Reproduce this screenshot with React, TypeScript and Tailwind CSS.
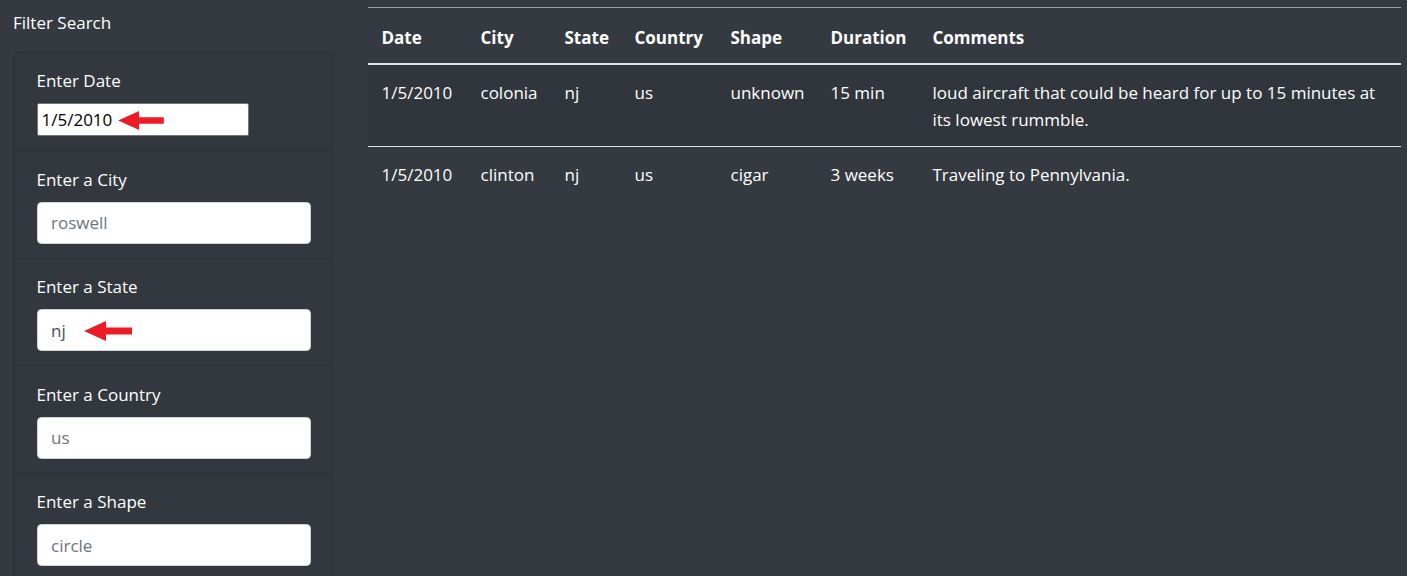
import React from 'react';

type Sighting = {
  datetime: string;
  city: string;
  state: string;
  country: string;
  shape: string;
  duration: string;
  comments: string;
};

const rows: Sighting[] = [
  {
    datetime: '1/5/2010',
    city: 'colonia',
    state: 'nj',
    country: 'us',
    shape: 'unknown',
    duration: '15 min',
    comments: 'loud aircraft that could be heard for up to 15 minutes at its lowest rummble.',
  },
  {
    datetime: '1/5/2010',
    city: 'clinton',
    state: 'nj',
    country: 'us',
    shape: 'cigar',
    duration: '3 weeks',
    comments: 'Traveling to Pennylvania.',
  },
];

// red annotation arrow pointing left
function Arrow({ className }: { className?: string }) {
  return (
    <svg viewBox="0 0 48 20" className={className} aria-hidden="true">
      <polygon points="0,10 22,0 22,6.5 48,6.5 48,13.5 22,13.5 22,20" fill="#ed1c24" />
    </svg>
  );
}

const cols = [
  { label: 'Date', w: 'w-[99px]' },
  { label: 'City', w: 'w-[84px]' },
  { label: 'State', w: 'w-[70px]' },
  { label: 'Country', w: 'w-[96px]' },
  { label: 'Shape', w: 'w-[100px]' },
  { label: 'Duration', w: 'w-[102px]' },
  { label: 'Comments', w: '' },
];

function FilterItem({ label, placeholder, value, arrow }: { label: string; placeholder: string; value?: string; arrow?: boolean }) {
  return (
    <li className="border-b border-[#2b3035] px-[22.5px] pt-[14.5px] pb-[14px]">
      <label className="block mb-[9px] text-white">{label}</label>
      <div className="relative">
        <input
          className="w-[274px] h-[42px] rounded-[4.5px] border border-[#ced4da] bg-white px-[13.5px] text-[#495057] placeholder:text-[#6c757d] outline-none"
          placeholder={placeholder}
          defaultValue={value}
        />
        {arrow && <Arrow className="absolute left-[44px] top-[12px] w-[54px] h-[20px]" />}
      </div>
    </li>
  );
}

export default function App() {
  return (
    <div
      className="min-h-screen bg-[#343a40] text-white flex text-[17px] leading-[27px]"
      style={{ fontFamily: '"Open Sans", "Noto Sans", sans-serif' }}
    >
      <aside className="w-[346px] shrink-0 pl-[13px] pr-[13px]">
        <h5 className="pt-[8.5px] mb-[16.5px] text-[17px]">Filter Search</h5>
        <ul className="w-[320px] rounded-t-[4.5px] border border-[#2b3035] bg-[#32383e]">
          <li className="border-b border-[#2b3035] px-[22.5px] pt-[14px] pb-[14px]">
            <label className="block mb-[9px] text-white">Enter Date</label>
            <div className="relative">
              <input
                className="w-[212px] h-[33px] rounded-[2px] border border-[#767676] bg-white px-[4px] text-black outline-none"
                defaultValue="1/5/2010"
              />
              <Arrow className="absolute left-[80px] top-[8px] w-[48px] h-[19px]" />
            </div>
          </li>
          <FilterItem label="Enter a City" placeholder="roswell" />
          <FilterItem label="Enter a State" placeholder="CA" value="nj" arrow />
          <FilterItem label="Enter a Country" placeholder="us" />
          <FilterItem label="Enter a Shape" placeholder="circle" />
        </ul>
      </aside>
      <main className="flex-1 pl-[22px] pr-[6px] pt-[7px]">
        <table className="w-full border-collapse table-fixed">
          <thead>
            <tr className="border-t border-[#9a9ea3] border-b-2 border-b-[#dee2e6]">
              {cols.map((c) => (
                <th key={c.label} className={`${c.w} text-left font-bold px-[13.5px] pt-[16px] pb-[12px] align-bottom`}>
                  {c.label}
                </th>
              ))}
            </tr>
          </thead>
          <tbody>
            {rows.map((r, i) => (
              <tr key={i} className={i % 2 === 0 ? 'bg-[#30363c] border-b border-[#dee2e6]' : ''}>
                <td className="px-[13.5px] py-[13.5px] align-top">{r.datetime}</td>
                <td className="px-[13.5px] py-[13.5px] align-top">{r.city}</td>
                <td className="px-[13.5px] py-[13.5px] align-top">{r.state}</td>
                <td className="px-[13.5px] py-[13.5px] align-top">{r.country}</td>
                <td className="px-[13.5px] py-[13.5px] align-top">{r.shape}</td>
                <td className="px-[13.5px] py-[13.5px] align-top">{r.duration}</td>
                <td className="px-[13.5px] py-[13.5px] align-top">{r.comments}</td>
              </tr>
            ))}
          </tbody>
        </table>
      </main>
    </div>
  );
}
